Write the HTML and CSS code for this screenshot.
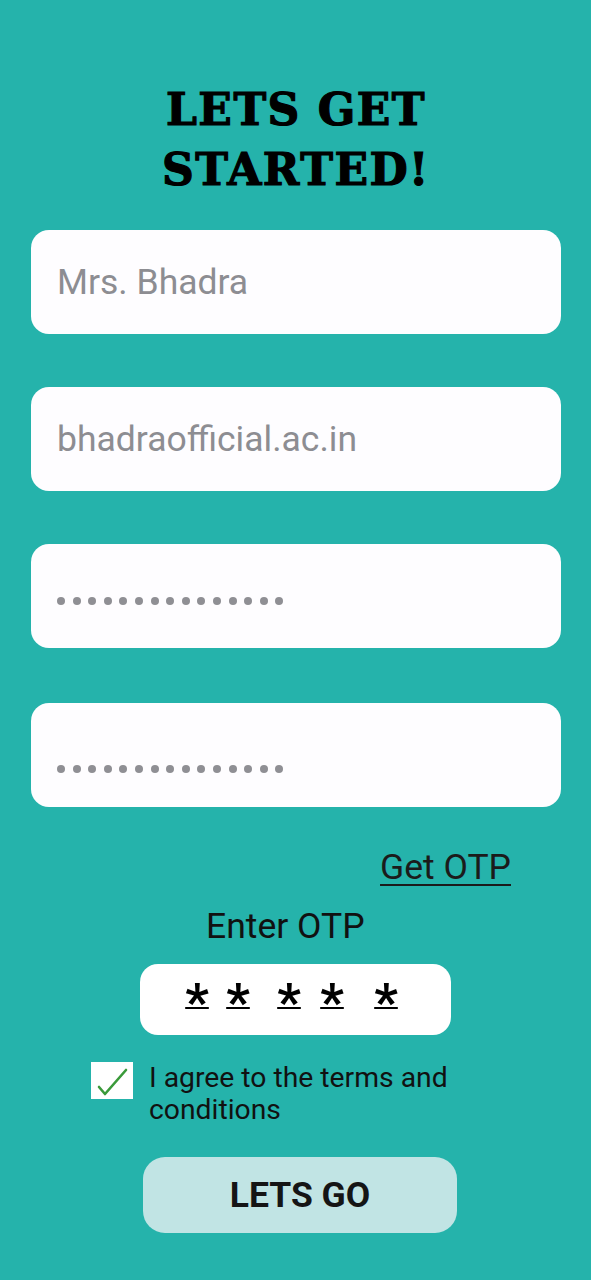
FILE: index.html
```html
<!DOCTYPE html>
<html>
<head>
<meta charset="utf-8">
<link rel="stylesheet" href="styles.css">
</head>
<body>
<main class="page">
  <h1 class="title">LETS GET<br>STARTED!</h1>
  <div class="field"><span class="ph">Mrs. Bhadra</span></div>
  <div class="field"><span class="ph">bhadraofficial.ac.in</span></div>
  <div class="field dots-field pw1"><span class="dots"><i></i><i></i><i></i><i></i><i></i><i></i><i></i><i></i><i></i><i></i><i></i><i></i><i></i><i></i><i></i></span></div>
  <div class="field dots-field pw2"><span class="dots"><i></i><i></i><i></i><i></i><i></i><i></i><i></i><i></i><i></i><i></i><i></i><i></i><i></i><i></i><i></i></span></div>
  <div class="otp-link-row"><a class="otp-link">Get OTP</a></div>
  <div class="enter-otp">Enter OTP</div>
  <div class="otp-box">
    <span class="star s1">*</span><span class="star s2">*</span><span class="star s3">*</span><span class="star s4">*</span><span class="star s5">*</span>
  </div>
  <div class="agree">
    <span class="check"><svg width="36" height="32" viewBox="0 0 36 32"><path d="M5 22 L11 29 L32 5" fill="none" stroke="#3a9a3a" stroke-width="2.6" stroke-linecap="round" stroke-linejoin="round"/></svg></span>
    <span class="agree-text">I agree to the terms and conditions</span>
  </div>
  <div class="btn-row"><button class="btn">LETS GO</button></div>
</main>
</body>
</html>
```
FILE: styles.css
```css
html, body {
  margin: 0;
  padding: 0;
  background: #25b3ab;
}
.page {
  width: 591px;
  height: 1280px;
  box-sizing: border-box;
  padding: 80px 30px 0 31px;
  font-family: Roboto, "Liberation Sans", sans-serif;
  display: flex;
  flex-direction: column;
}
.title {
  margin: 0 0 32px;
  font-family: "DejaVu Serif", serif;
  font-weight: bold;
  font-size: 44px;
  line-height: 60px;
  letter-spacing: 1.5px;
  -webkit-text-stroke: 1.2px #000;
  text-align: center;
  color: #000;
  height: 118px;
}
.field {
  height: 104px;
  box-sizing: border-box;
  background: #fefdff;
  border-radius: 18px;
  margin-bottom: 53px;
  display: flex;
  align-items: center;
  padding-left: 26px;
}
.pw1 { margin-bottom: 55px; padding-top: 10px; }
.pw2 { padding-top: 28px; }
.ph {
  font-size: 35.5px;
  color: #8d8d92;
}
.dots { display: flex; gap: 7.6px; }
.dots i {
  display: block;
  width: 8px;
  height: 8px;
  border-radius: 50%;
  background: #8f8f94;
}
.otp-link-row {
  margin-top: -15px;
  display: flex;
  justify-content: flex-end;
  padding-right: 50px;
}
.otp-link {
  font-size: 35.5px;
  color: #1b1b1b;
  text-decoration: underline;
  text-decoration-thickness: 2px;
  text-underline-offset: 5px;
  line-height: 44px;
}
.enter-otp {
  margin-top: 15px;
  padding-left: 175px;
  font-size: 35.5px;
  color: #111;
  line-height: 44px;
}
.otp-box {
  margin: 16px 0 0 109px;
  width: 311px;
  height: 71px;
  background: #fff;
  border-radius: 18px;
  position: relative;
}
.star {
  position: absolute;
  top: 9px;
  width: 24px;
  text-align: center;
  font-size: 52px;
  line-height: 60px;
  font-weight: bold;
  color: #000;
  text-decoration: underline;
  text-decoration-thickness: 2px;
  text-underline-offset: -13px;
}
.s1 { left: 45px; }
.s2 { left: 86px; }
.s3 { left: 137px; }
.s4 { left: 180px; }
.s5 { left: 234px; }
.agree {
  margin: 26px 0 0 60px;
  display: flex;
  align-items: flex-start;
  gap: 16px;
}
.check {
  width: 42px;
  height: 37px;
  margin-top: 1px;
  background: #fff;
  display: flex;
  align-items: center;
  justify-content: center;
  flex: none;
}
.agree-text {
  font-size: 28.3px;
  line-height: 32px;
  color: #111;
  width: 330px;
  margin-top: 1px;
}
.btn-row {
  margin-top: 31px;
  padding-left: 112px;
}
.btn {
  width: 314px;
  height: 76px;
  border: none;
  border-radius: 22px;
  background: #c1e4e4;
  font-family: Roboto, "Liberation Sans", sans-serif;
  font-weight: bold;
  font-size: 35.5px;
  color: #151515;
  padding: 0;
}
```
